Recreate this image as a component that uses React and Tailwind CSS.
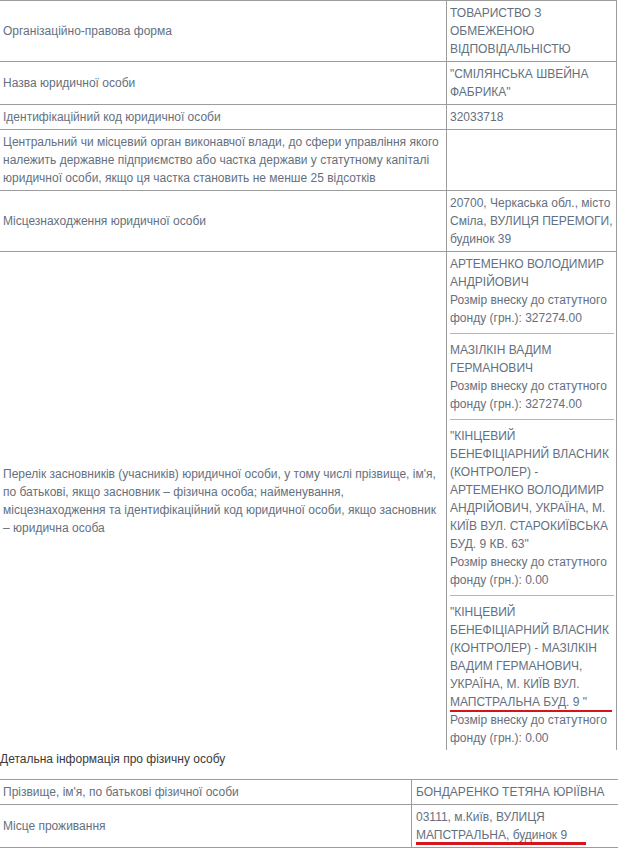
import React from "react";

const L = ({ children, className = "" }) => (
  <div className={"whitespace-nowrap " + className}>{children}</div>
);

function Row({ left, right, last }) {
  return (
    <div className={"grid grid-cols-[447px_1fr] " + (last ? "" : "border-b border-[#9c9c9c]")}>
      <div className="border-r border-[#9c9c9c] pl-[3px] pr-[3px] py-[3px] flex flex-col justify-center">
        {left}
      </div>
      <div className="pl-[3px] pr-[2px] py-[3px]">{right}</div>
    </div>
  );
}

const Hr = () => <div className="mt-[6px] mb-[7px] h-px bg-[#b4b4b4]" />;

export default function App() {
  return (
    <div
      className="w-[618px] h-[848px] overflow-hidden bg-white text-[12px] leading-[18px] text-[#647080]"
      style={{ fontFamily: '"Liberation Sans", Arial, sans-serif' }}
    >
      <div className="w-[617px] border-t border-r border-[#9c9c9c]">
        <Row
          left={<L>Організаційно-правова форма</L>}
          right={
            <>
              <L>ТОВАРИСТВО З</L>
              <L>ОБМЕЖЕНОЮ</L>
              <L>ВІДПОВІДАЛЬНІСТЮ</L>
            </>
          }
        />
        <Row
          left={<L>Назва юридичної особи</L>}
          right={
            <>
              <L>"СМІЛЯНСЬКА ШВЕЙНА</L>
              <L>ФАБРИКА"</L>
            </>
          }
        />
        <Row left={<L>Ідентифікаційний код юридичної особи</L>} right={<L>32033718</L>} />
        <Row
          left={
            <>
              <L>Центральний чи місцевий орган виконавчої влади, до сфери управління якого</L>
              <L>належить державне підприємство або частка держави у статутному капіталі</L>
              <L>юридичної особи, якщо ця частка становить не менше 25 відсотків</L>
            </>
          }
          right={<div className="h-[54px]" />}
        />
        <Row
          left={<L>Місцезнаходження юридичної особи</L>}
          right={
            <>
              <L>20700, Черкаська обл., місто</L>
              <L>Сміла, ВУЛИЦЯ ПЕРЕМОГИ,</L>
              <L>будинок 39</L>
            </>
          }
        />
        <Row
          last
          left={
            <>
              <L>Перелік засновників (учасників) юридичної особи, у тому числі прізвище, ім'я,</L>
              <L>по батькові, якщо засновник – фізична особа; найменування,</L>
              <L>місцезнаходження та ідентифікаційний код юридичної особи, якщо засновник</L>
              <L>– юридична особа</L>
            </>
          }
          right={
            <>
              <L>АРТЕМЕНКО ВОЛОДИМИР</L>
              <L>АНДРІЙОВИЧ</L>
              <L>Розмір внеску до статутного</L>
              <L>фонду (грн.): 327274.00</L>
              <Hr />
              <L>МАЗІЛКІН ВАДИМ</L>
              <L>ГЕРМАНОВИЧ</L>
              <L>Розмір внеску до статутного</L>
              <L>фонду (грн.): 327274.00</L>
              <Hr />
              <L>"КІНЦЕВИЙ</L>
              <L>БЕНЕФІЦІАРНИЙ ВЛАСНИК</L>
              <L>(КОНТРОЛЕР) -</L>
              <L>АРТЕМЕНКО ВОЛОДИМИР</L>
              <L>АНДРІЙОВИЧ, УКРАЇНА, М.</L>
              <L>КИЇВ ВУЛ. СТАРОКИЇВСЬКА</L>
              <L>БУД. 9 КВ. 63"</L>
              <L>Розмір внеску до статутного</L>
              <L>фонду (грн.): 0.00</L>
              <Hr />
              <L>"КІНЦЕВИЙ</L>
              <L>БЕНЕФІЦІАРНИЙ ВЛАСНИК</L>
              <L>(КОНТРОЛЕР) - МАЗІЛКІН</L>
              <L>ВАДИМ ГЕРМАНОВИЧ,</L>
              <L>УКРАЇНА, М. КИЇВ ВУЛ.</L>
              <L className="relative">
                МАПСТРАЛЬНА БУД. 9 "
                <div className="absolute left-0 bottom-[-1px] w-[162px] h-[2px] bg-[#d4161c]" />
              </L>
              <L>Розмір внеску до статутного</L>
              <L>фонду (грн.): 0.00</L>
            </>
          }
        />
      </div>

      <div className="text-[#3a3a3a] whitespace-nowrap">Детальна інформація про фізичну особу</div>

      <div className="mt-[11px] w-[618px] border-t border-[#9c9c9c]">
        <div className="grid grid-cols-[412px_1fr] border-b border-[#9c9c9c]">
          <div className="border-r border-[#9c9c9c] pl-[3px] pt-[3px] pb-[3px] flex items-center">
            <L>Прізвище, ім'я, по батькові фізичної особи</L>
          </div>
          <div className="pl-[4px] pt-[3px] pb-[3px]">
            <L>БОНДАРЕНКО ТЕТЯНА ЮРІЇВНА</L>
          </div>
        </div>
        <div className="grid grid-cols-[412px_1fr] border-b border-[#9c9c9c]">
          <div className="border-r border-[#9c9c9c] pl-[3px] py-[3px] flex items-center">
            <L>Місце проживання</L>
          </div>
          <div className="pl-[4px] py-[3px]">
            <L>03111, м.Київ, ВУЛИЦЯ</L>
            <L className="relative">
              МАПСТРАЛЬНА, будинок 9
              <div className="absolute left-0 bottom-[-1px] w-[170px] h-[3px] bg-[#d4161c]" />
            </L>
          </div>
        </div>
      </div>
    </div>
  );
}
